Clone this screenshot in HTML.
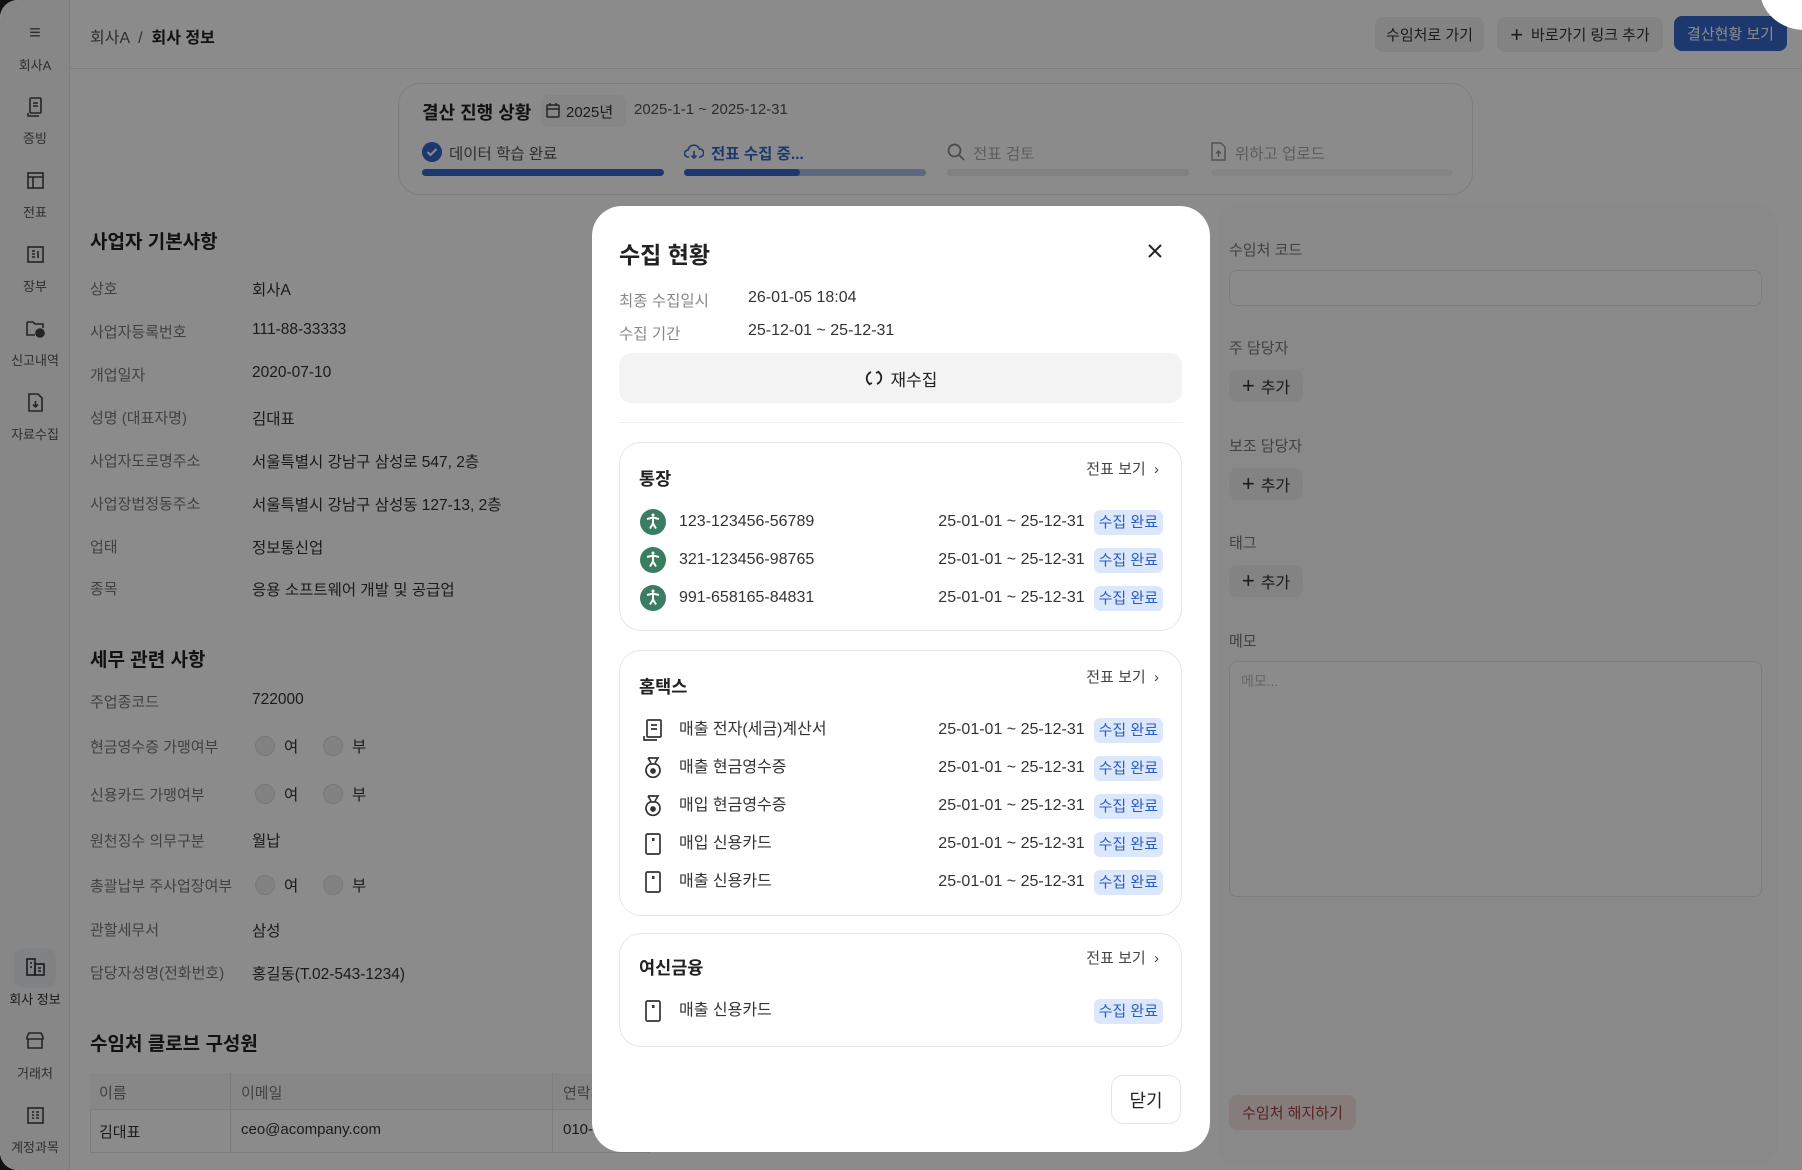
<!DOCTYPE html>
<html><head><meta charset="utf-8"><style>
*{box-sizing:border-box;margin:0;padding:0}
body{width:1802px;height:1170px;overflow:hidden;background:#111;font-family:"Liberation Sans","Noto Sans CJK KR",sans-serif;color:#222;position:relative}
.page{position:absolute;left:0;top:0;width:1802px;height:1170px;background:#fff;border-radius:18px 0 0 18px;overflow:hidden}
.a{position:absolute;white-space:nowrap}
.side{position:absolute;left:0;top:0;width:70px;height:1170px;background:#f7f7f8;border-right:1px solid #e6e6e8}
.si{position:absolute;left:0;width:70px;text-align:center;font-size:13px;color:#555}
.hdr{position:absolute;left:70px;top:0;right:0;height:69px;border-bottom:1px solid #e8e8ea}
.btn{position:absolute;height:35px;border-radius:8px;background:#f1f1f3;font-size:15px;color:#333;display:flex;align-items:center;justify-content:center}
.lbl{position:absolute;left:90px;font-size:15px;color:#777}
.val{position:absolute;left:252px;font-size:15.5px;color:#333}
.h2{position:absolute;left:90px;font-size:19px;font-weight:bold;color:#222}
.radio{position:absolute;width:20px;height:20px;border-radius:50%;background:#eee;border:1px solid #ddd}
.ov{position:absolute;left:0;top:0;width:1802px;height:1170px;background:rgba(0,0,0,0.455)}
.modal{position:absolute;left:592px;top:206px;width:618px;height:946px;background:#fff;border-radius:30px}
.m{position:absolute;white-space:nowrap}
.card{position:absolute;left:27px;width:563px;border:1.5px solid #e6e6e8;border-radius:22px}
.ct{position:absolute;left:19px;font-size:17.5px;font-weight:bold;color:#222}
.cv{position:absolute;right:22px;font-size:15px;color:#444}
.row{position:absolute;left:20px;right:18px;height:26px;display:flex;align-items:center}
.row .ic{width:26px;height:26px;display:flex;align-items:center;justify-content:center;margin-right:13px}
.row .t{font-size:16px;color:#333;flex:1;line-height:26px}
.row .d{font-size:16px;color:#333;margin-right:9px;line-height:26px}
.bd{background:#dbe7fd;color:#2b5cc0;font-size:15px;border-radius:6px;padding:2px 5px;height:25px;line-height:21px}
</style></head><body>
<div class="page">
 <div class="side">
  <div class="si" style="top:22px;font-size:20px;color:#555">≡</div>
  <div class="si" style="top:55px">회사A</div>
  <svg class="a" style="left:27px;top:97px" width="16" height="20" viewBox="0 0 16 20" fill="none" stroke="#444" stroke-width="1.6"><rect x="3" y="1" width="11" height="15" rx="1"/><path d="M1 16v3h11M6 6h5M6 9h5"/></svg>
  <div class="si" style="top:128px">증빙</div>
  <svg class="a" style="left:27px;top:172px" width="17" height="17" viewBox="0 0 17 17" fill="none" stroke="#444" stroke-width="1.6"><rect x="1" y="1" width="15" height="15"/><path d="M1 5h15M6 5v11"/></svg>
  <div class="si" style="top:202px">전표</div>
  <svg class="a" style="left:27px;top:246px" width="17" height="17" viewBox="0 0 17 17" fill="none" stroke="#444" stroke-width="1.6"><rect x="1" y="1" width="15" height="15"/><path d="M5 5h3M5 8h3M5 11h3M11 5v7"/></svg>
  <div class="si" style="top:276px">장부</div>
  <svg class="a" style="left:26px;top:320px" width="19" height="18" viewBox="0 0 19 18" fill="none" stroke="#444" stroke-width="1.6"><path d="M1 2h6l2 2h8v4M1 2v13h8"/><circle cx="14" cy="13" r="4" fill="#444"/></svg>
  <div class="si" style="top:350px">신고내역</div>
  <svg class="a" style="left:28px;top:393px" width="15" height="19" viewBox="0 0 15 19" fill="none" stroke="#444" stroke-width="1.6"><path d="M1 1h9l4 4v13H1z"/><path d="M7.5 8v6M5 11.5l2.5 2.5 2.5-2.5"/></svg>
  <div class="si" style="top:424px">자료수집</div>
  <div class="a" style="left:14px;top:948px;width:42px;height:40px;border-radius:10px;background:#eceef0"></div>
  <svg class="a" style="left:26px;top:958px" width="19" height="18" viewBox="0 0 19 18" fill="none" stroke="#333" stroke-width="1.6"><rect x="1" y="1" width="8" height="16"/><rect x="9" y="6" width="9" height="11"/><path d="M4 5h2M4 9h2M12 10h3M12 13h3"/></svg>
  <div class="si" style="top:989px;color:#333">회사 정보</div>
  <svg class="a" style="left:26px;top:1032px" width="18" height="17" viewBox="0 0 18 17" fill="none" stroke="#444" stroke-width="1.6"><path d="M1 5l2-4h12l2 4v2H1zM2 7v9h14V7"/></svg>
  <div class="si" style="top:1063px">거래처</div>
  <svg class="a" style="left:27px;top:1107px" width="17" height="17" viewBox="0 0 17 17" fill="none" stroke="#444" stroke-width="1.6"><rect x="1" y="1" width="15" height="15"/><path d="M5 5h2M5 8h2M5 11h2M9 5h3M9 8h3M9 11h3"/></svg>
  <div class="si" style="top:1137px">계정과목</div>
 </div>
 <div class="hdr"></div>
 <div class="a" style="left:90px;top:24px;font-size:16px;color:#555">회사A &nbsp;/&nbsp; <b style="color:#222">회사 정보</b></div>
 <div class="btn" style="left:1375px;top:17px;width:109px">수임처로 가기</div>
 <div class="btn" style="left:1497px;top:17px;width:166px"><span style="font-size:22px;margin-right:8px;font-weight:300">+</span>바로가기 링크 추가</div>
 <div class="btn" style="left:1674px;top:16px;width:113px;background:#3567cc;color:#fff">결산현황 보기</div>
 <div class="a" style="left:1760px;top:-50px;width:90px;height:80px;border-radius:50%;background:#fff;z-index:5"></div>

 <div class="a" style="left:398px;top:83px;width:1075px;height:112px;border:1.5px solid #e6e6e8;border-radius:22px"></div>
 <div class="a" style="left:422px;top:99px;font-size:18px;font-weight:bold">결산 진행 상황</div>
 <div class="a" style="left:541px;top:95px;width:85px;height:32px;border-radius:7px;background:#f6f6f7"></div>
 <svg class="a" style="left:546px;top:103px" width="14" height="15" viewBox="0 0 14 15" fill="none" stroke="#444" stroke-width="1.5"><rect x="1" y="2" width="12" height="12" rx="1"/><path d="M1 6h12M4 0v3M10 0v3"/></svg>
 <div class="a" style="left:566px;top:101px;font-size:15px;color:#333">2025년</div>
 <div class="a" style="left:634px;top:101px;font-size:15px;color:#555">2025-1-1 ~ 2025-12-31</div>
 <svg class="a" style="left:422px;top:142px" width="20" height="20"><circle cx="10" cy="10" r="10" fill="#3567cc"/><path d="M5.5 10l3 3 6-6" stroke="#fff" stroke-width="2" fill="none"/></svg>
 <div class="a" style="left:449px;top:142px;font-size:15.5px;color:#555">데이터 학습 완료</div>
 <svg class="a" style="left:684px;top:142px" width="20" height="19" viewBox="0 0 20 19" fill="none" stroke="#3567cc" stroke-width="1.6"><path d="M5 15H4a3.5 3.5 0 010-7 6 6 0 0111.5-1A4 4 0 0116 15h-1M10 9v7M7.5 13.5l2.5 2.5 2.5-2.5"/></svg>
 <div class="a" style="left:711px;top:142px;font-size:15.5px;color:#3567cc;font-weight:bold">전표 수집 중...</div>
 <svg class="a" style="left:947px;top:143px" width="18" height="18" fill="none" stroke="#888" stroke-width="1.7"><circle cx="7.5" cy="7.5" r="6"/><path d="M12 12l5 5"/></svg>
 <div class="a" style="left:973px;top:142px;font-size:15.5px;color:#aaa">전표 검토</div>
 <svg class="a" style="left:1211px;top:142px" width="15" height="19" fill="none" stroke="#999" stroke-width="1.5"><path d="M1 1h9l4 4v13H1z"/><path d="M7.5 15V9M5 11.5l2.5-2.5 2.5 2.5"/></svg>
 <div class="a" style="left:1235px;top:142px;font-size:15.5px;color:#aaa">위하고 업로드</div>
 <div class="a" style="left:422px;top:169px;width:242px;height:7px;border-radius:4px;background:#3567cc"></div>
 <div class="a" style="left:684px;top:169px;width:242px;height:7px;border-radius:4px;background:#a9c0ec"></div>
 <div class="a" style="left:684px;top:169px;width:116px;height:7px;border-radius:4px;background:#3567cc"></div>
 <div class="a" style="left:947px;top:169px;width:242px;height:7px;border-radius:4px;background:#ededef"></div>
 <div class="a" style="left:1211px;top:169px;width:242px;height:7px;border-radius:4px;background:#f3f3f4"></div>

 <div class="h2" style="top:227px">사업자 기본사항</div>
 <div class="lbl" style="top:278px">상호</div><div class="val" style="top:278px">회사A</div>
 <div class="lbl" style="top:321px">사업자등록번호</div><div class="val" style="top:321px">111-88-33333</div>
 <div class="lbl" style="top:364px">개업일자</div><div class="val" style="top:364px">2020-07-10</div>
 <div class="lbl" style="top:407px">성명 (대표자명)</div><div class="val" style="top:407px">김대표</div>
 <div class="lbl" style="top:450px">사업자도로명주소</div><div class="val" style="top:450px">서울특별시 강남구 삼성로 547, 2층</div>
 <div class="lbl" style="top:493px">사업장법정동주소</div><div class="val" style="top:493px">서울특별시 강남구 삼성동 127-13, 2층</div>
 <div class="lbl" style="top:536px">업태</div><div class="val" style="top:536px">정보통신업</div>
 <div class="lbl" style="top:578px">종목</div><div class="val" style="top:578px">응용 소프트웨어 개발 및 공급업</div>
 <div class="h2" style="top:645px">세무 관련 사항</div>
 <div class="lbl" style="top:691px">주업종코드</div><div class="val" style="top:691px">722000</div>
 <div class="lbl" style="top:736px">현금영수증 가맹여부</div>
 <div class="radio" style="left:255px;top:736px"></div><div class="val" style="left:284px;top:735px">여</div>
 <div class="radio" style="left:323px;top:736px"></div><div class="val" style="left:352px;top:735px">부</div>
 <div class="lbl" style="top:784px">신용카드 가맹여부</div>
 <div class="radio" style="left:255px;top:784px"></div><div class="val" style="left:284px;top:783px">여</div>
 <div class="radio" style="left:323px;top:784px"></div><div class="val" style="left:352px;top:783px">부</div>
 <div class="lbl" style="top:830px">원천징수 의무구분</div><div class="val" style="top:829px">월납</div>
 <div class="lbl" style="top:875px">총괄납부 주사업장여부</div>
 <div class="radio" style="left:255px;top:875px"></div><div class="val" style="left:284px;top:874px">여</div>
 <div class="radio" style="left:323px;top:875px"></div><div class="val" style="left:352px;top:874px">부</div>
 <div class="lbl" style="top:919px">관할세무서</div><div class="val" style="top:919px">삼성</div>
 <div class="lbl" style="top:962px">담당자성명(전화번호)</div><div class="val" style="top:962px">홍길동(T.02-543-1234)</div>
 <div class="h2" style="top:1029px">수임처 클로브 구성원</div>
 <div class="a" style="left:90px;top:1073px;width:560px;height:80px;border:1px solid #e6e6e8;background:#fff"></div>
 <div class="a" style="left:90px;top:1073px;width:560px;height:37px;background:#f7f7f8;border-bottom:1px solid #e6e6e8"></div>
 <div class="a" style="left:230px;top:1073px;width:1px;height:80px;background:#e6e6e8"></div>
 <div class="a" style="left:552px;top:1073px;width:1px;height:80px;background:#e6e6e8"></div>
 <div class="a" style="left:99px;top:1082px;font-size:15px;color:#777">이름</div>
 <div class="a" style="left:241px;top:1082px;font-size:15px;color:#777">이메일</div>
 <div class="a" style="left:563px;top:1082px;font-size:15px;color:#777">연락처</div>
 <div class="a" style="left:99px;top:1121px;font-size:15px;color:#333">김대표</div>
 <div class="a" style="left:241px;top:1121px;font-size:15px;color:#333">ceo@acompany.com</div>
 <div class="a" style="left:563px;top:1121px;font-size:15px;color:#333">010-1234-5678</div>

 <div class="a" style="left:1218px;top:205px;width:560px;height:960px;border-radius:20px;background:#fcfcfc"></div>
 <div class="a" style="left:1229px;top:239px;font-size:15px;color:#777">수임처 코드</div>
 <div class="a" style="left:1229px;top:270px;width:533px;height:36px;border:1px solid #e3e3e5;border-radius:8px;background:#fff"></div>
 <div class="a" style="left:1229px;top:337px;font-size:15px;color:#777">주 담당자</div>
 <div class="btn" style="left:1229px;top:370px;width:74px;height:32px;font-size:16px"><span style="font-size:22px;margin-right:6px;font-weight:300">+</span>추가</div>
 <div class="a" style="left:1229px;top:435px;font-size:15px;color:#777">보조 담당자</div>
 <div class="btn" style="left:1229px;top:468px;width:74px;height:32px;font-size:16px"><span style="font-size:22px;margin-right:6px;font-weight:300">+</span>추가</div>
 <div class="a" style="left:1229px;top:532px;font-size:15px;color:#777">태그</div>
 <div class="btn" style="left:1229px;top:565px;width:74px;height:32px;font-size:16px"><span style="font-size:22px;margin-right:6px;font-weight:300">+</span>추가</div>
 <div class="a" style="left:1229px;top:630px;font-size:15px;color:#777">메모</div>
 <div class="a" style="left:1229px;top:661px;width:533px;height:236px;border:1px solid #e3e3e5;border-radius:8px;background:#fff"></div>
 <div class="a" style="left:1241px;top:671px;font-size:14px;color:#bbb">메모...</div>
 <div class="btn" style="left:1229px;top:1095px;width:127px;height:35px;background:#f6e4e4;color:#a04040">수임처 해지하기</div>

 <div class="ov"></div>

 <div class="modal">
  <div class="m" style="left:27px;top:30px;font-size:23px;font-weight:bold;color:#222">수집 현황</div>
  <svg class="m" style="left:556px;top:38px" width="14" height="14" stroke="#222" stroke-width="2"><path d="M1 1l12 12M13 1L1 13"/></svg>
  <div class="m" style="left:27px;top:83px;font-size:15.5px;color:#888">최종 수집일시</div>
  <div class="m" style="left:156px;top:83px;font-size:16px;color:#333">26-01-05 18:04</div>
  <div class="m" style="left:27px;top:116px;font-size:15.5px;color:#888">수집 기간</div>
  <div class="m" style="left:156px;top:116px;font-size:16px;color:#333">25-12-01 ~ 25-12-31</div>
  <div class="m" style="left:27px;top:147px;width:563px;height:50px;border-radius:12px;background:#f3f3f4;display:flex;align-items:center;justify-content:center;font-size:17px;color:#222">
   <svg width="20" height="20" viewBox="0 0 20 20" fill="none" stroke="#222" stroke-width="1.8" style="margin-right:7px"><path d="M7 4a7 7 0 00-1.5 12M13 16a7 7 0 001.5-12M4 14l1.5 2.2L8 15M16 6l-1.5-2.2L12 5"/></svg>재수집</div>
  <div class="m" style="left:27px;top:216px;width:563px;height:1px;background:#efeff0"></div>

  <div class="card" style="top:236px;height:189px">
   <div class="ct" style="top:23px">통장</div>
   <div class="cv" style="top:15px">전표 보기 &nbsp;›</div>
   <div class="row" style="top:66px"><div class="ic"><svg width="26" height="26"><circle cx="13" cy="13" r="13" fill="#3a7d60"/><path d="M7 10l6-1.5 6 1.5M13 8.5v6l-3 5M13 14.5l3 5" stroke="#fff" stroke-width="2" fill="none"/><circle cx="13" cy="6" r="1.5" fill="#fff"/></svg></div><div class="t">123-123456-56789</div><div class="d">25-01-01 ~ 25-12-31</div><div class="bd">수집 완료</div></div>
   <div class="row" style="top:104px"><div class="ic"><svg width="26" height="26"><circle cx="13" cy="13" r="13" fill="#3a7d60"/><path d="M7 10l6-1.5 6 1.5M13 8.5v6l-3 5M13 14.5l3 5" stroke="#fff" stroke-width="2" fill="none"/><circle cx="13" cy="6" r="1.5" fill="#fff"/></svg></div><div class="t">321-123456-98765</div><div class="d">25-01-01 ~ 25-12-31</div><div class="bd">수집 완료</div></div>
   <div class="row" style="top:142px"><div class="ic"><svg width="26" height="26"><circle cx="13" cy="13" r="13" fill="#3a7d60"/><path d="M7 10l6-1.5 6 1.5M13 8.5v6l-3 5M13 14.5l3 5" stroke="#fff" stroke-width="2" fill="none"/><circle cx="13" cy="6" r="1.5" fill="#fff"/></svg></div><div class="t">991-658165-84831</div><div class="d">25-01-01 ~ 25-12-31</div><div class="bd">수집 완료</div></div>
  </div>

  <div class="card" style="top:444px;height:266px">
   <div class="ct" style="top:23px">홈택스</div>
   <div class="cv" style="top:15px">전표 보기 &nbsp;›</div>
   <div class="row" style="top:66px"><div class="ic"><svg width="20" height="22" fill="none" stroke="#333" stroke-width="1.7"><rect x="4" y="1" width="14" height="17" rx="1"/><path d="M1 17v4h13M8 6h6M8 10h6"/></svg></div><div class="t">매출 전자(세금)계산서</div><div class="d">25-01-01 ~ 25-12-31</div><div class="bd">수집 완료</div></div>
   <div class="row" style="top:104px"><div class="ic"><svg width="20" height="22" fill="none" stroke="#333" stroke-width="1.7"><path d="M5 1h10l-3 5M8 6L5 1M7 7a7 7 0 10 6 0z"/><circle cx="10" cy="14" r="2" fill="#333"/></svg></div><div class="t">매출 현금영수증</div><div class="d">25-01-01 ~ 25-12-31</div><div class="bd">수집 완료</div></div>
   <div class="row" style="top:142px"><div class="ic"><svg width="20" height="22" fill="none" stroke="#333" stroke-width="1.7"><path d="M5 1h10l-3 5M8 6L5 1M7 7a7 7 0 10 6 0z"/><circle cx="10" cy="14" r="2" fill="#333"/></svg></div><div class="t">매입 현금영수증</div><div class="d">25-01-01 ~ 25-12-31</div><div class="bd">수집 완료</div></div>
   <div class="row" style="top:180px"><div class="ic"><svg width="16" height="22" fill="none" stroke="#333" stroke-width="1.7"><rect x="1" y="1" width="14" height="20" rx="1.5"/><rect x="7" y="5" width="2.5" height="3" fill="#333" stroke="none"/></svg></div><div class="t">매입 신용카드</div><div class="d">25-01-01 ~ 25-12-31</div><div class="bd">수집 완료</div></div>
   <div class="row" style="top:218px"><div class="ic"><svg width="16" height="22" fill="none" stroke="#333" stroke-width="1.7"><rect x="1" y="1" width="14" height="20" rx="1.5"/><rect x="7" y="5" width="2.5" height="3" fill="#333" stroke="none"/></svg></div><div class="t">매출 신용카드</div><div class="d">25-01-01 ~ 25-12-31</div><div class="bd">수집 완료</div></div>
  </div>

  <div class="card" style="top:727px;height:114px">
   <div class="ct" style="top:21px">여신금융</div>
   <div class="cv" style="top:13px">전표 보기 &nbsp;›</div>
   <div class="row" style="top:64px"><div class="ic"><svg width="16" height="22" fill="none" stroke="#333" stroke-width="1.7"><rect x="1" y="1" width="14" height="20" rx="1.5"/><rect x="7" y="5" width="2.5" height="3" fill="#333" stroke="none"/></svg></div><div class="t">매출 신용카드</div><div class="bd">수집 완료</div></div>
  </div>

  <div class="m" style="left:519px;top:869px;width:70px;height:49px;border:1.5px solid #e6e6e8;border-radius:12px;display:flex;align-items:center;justify-content:center;font-size:18px;color:#222">닫기</div>
 </div>
</div>
</body></html>
